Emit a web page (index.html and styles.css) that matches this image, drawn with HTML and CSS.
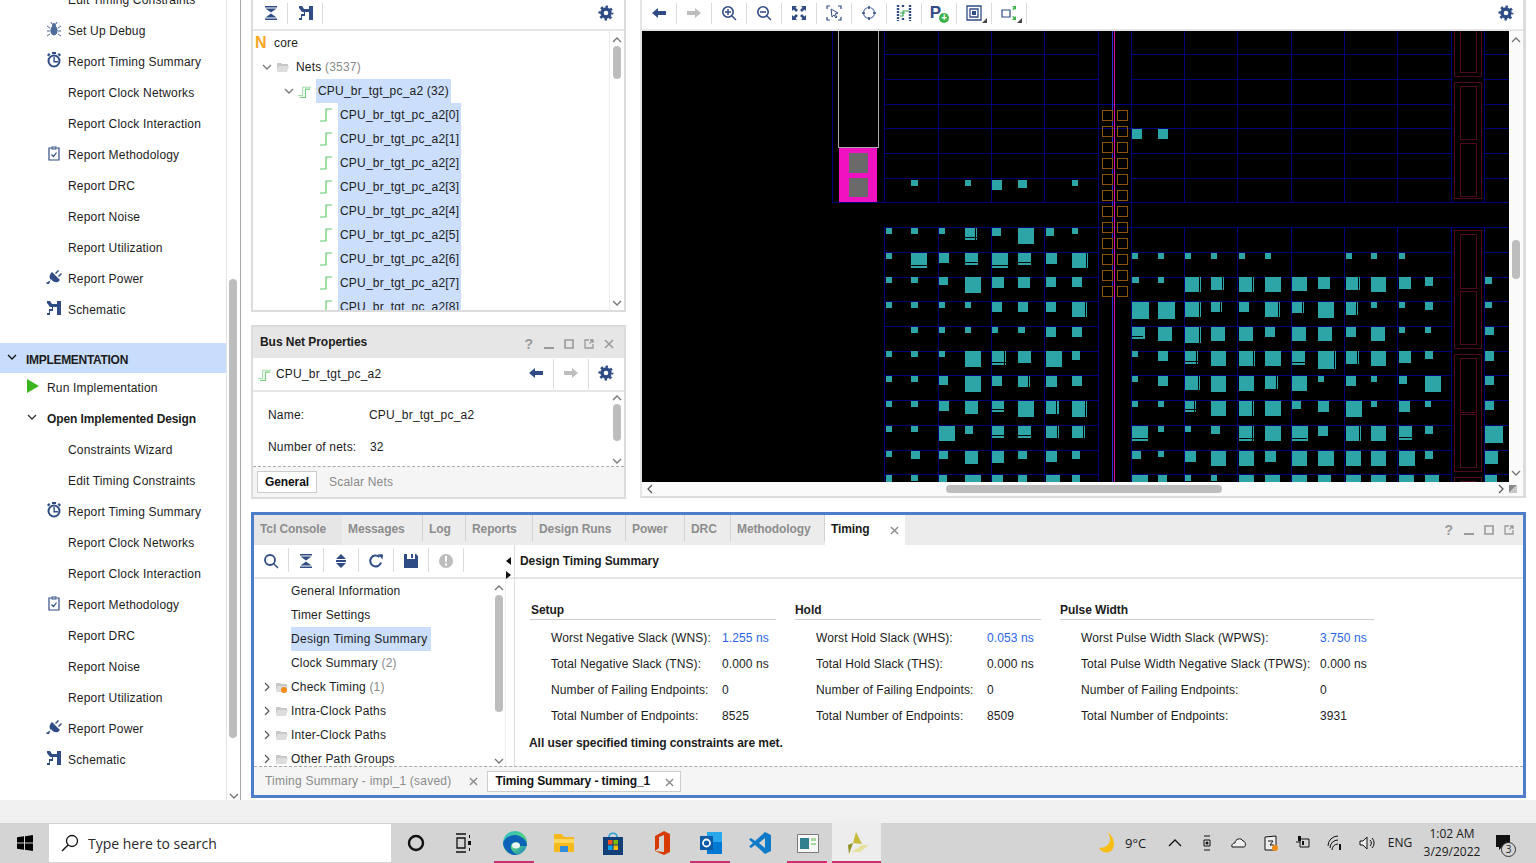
FILE: index.html
```html
<!DOCTYPE html>
<html lang="en">
<head>
<meta charset="utf-8">
<title>Vivado - Timing Summary</title>
<link rel="stylesheet" href="styles.css">
</head>
<body>
<svg class="defs" aria-hidden="true">
  <symbol id="i-gear" viewBox="0 0 16 16"><circle cx="8" cy="8" r="4" fill="none" stroke="currentColor" stroke-width="3.4"/><circle cx="8" cy="8" r="6.2" fill="none" stroke="currentColor" stroke-width="2.6" stroke-dasharray="2.43 2.44" stroke-dashoffset="1.2"/></symbol>
  <symbol id="i-left" viewBox="0 0 16 16"><path fill="currentColor" d="M1 8l6-5v3h8v4H7v3z"/></symbol>
  <symbol id="i-right" viewBox="0 0 16 16"><path fill="currentColor" d="M15 8L9 3v3H1v4h8v3z"/></symbol>
  <symbol id="i-collapse" viewBox="0 0 16 16"><path fill="currentColor" d="M2 1h12v1.500H2zM2.500 3.500h11L8 7.600zM8 8.400l5.500 4.100h-11zM2 13.500h12V15H2z"/></symbol>
  <symbol id="i-expand" viewBox="0 0 16 16"><path fill="currentColor" d="M8 1l5 5H3zM3 7h10v2H3zM3 10h10l-5 5z"/></symbol>
  <symbol id="i-schem" viewBox="0 0 16 16"><path fill="currentColor" d="M1 1h3l2 3h5V1h4v14h-4V7H7v4H4v4H1v-2h2V9h3V7H4L1 3z"/></symbol>
  <symbol id="i-clock" viewBox="0 0 16 16"><circle cx="8" cy="9" r="5.500" fill="none" stroke="currentColor" stroke-width="2"/><path fill="currentColor" d="M6 0h4v2H6zM7.400 5h1.400v4H12v1.400H7.400zM1 3l2-2 1.500 1.500-2 2zM15 3l-2-2-1.500 1.500 2 2z"/></symbol>
  <symbol id="i-clip" viewBox="0 0 16 16"><path fill="none" stroke="currentColor" stroke-width="1.200" d="M5 3H3v12h10V3h-2M6 2h4v2H6zM5.500 9.500l2 2 3-4"/></symbol>
  <symbol id="i-bug" viewBox="0 0 16 16"><ellipse cx="8" cy="9.500" rx="3.600" ry="5" fill="currentColor"/><circle cx="8" cy="4" r="2" fill="currentColor"/><path fill="none" stroke="currentColor" d="M1 5l3 2M15 5l-3 2M1 10h3M15 10h-3M1 15l3-2M15 15l-3-2M5 1l1 2M11 1l-1 2"/></symbol>
  <symbol id="i-plug" viewBox="0 0 16 16"><path fill="currentColor" d="M6 3l8 8-2 2c-3 1-6-1-7-3L3 15 1 15 0 14l5-3C3 9 3 6 6 3zM9 4l3-3 1 1-3 3zM12 7l3-3 1 1-3 3z"/></symbol>
  <symbol id="i-play" viewBox="0 0 12 14"><path fill="currentColor" d="M0 0l12 7-12 7z"/></symbol>
  <symbol id="i-down" viewBox="0 0 10 6"><path fill="none" stroke="currentColor" stroke-width="1.300" d="M1 1l4 4 4-4"/></symbol>
  <symbol id="i-up" viewBox="0 0 10 6"><path fill="none" stroke="currentColor" stroke-width="1.300" d="M1 5l4-4 4 4"/></symbol>
  <symbol id="i-chev" viewBox="0 0 6 10"><path fill="none" stroke="currentColor" stroke-width="1.200" d="M1 1l4 4-4 4"/></symbol>
  <symbol id="i-folder" viewBox="0 0 13 12"><path fill="#c8c8c8" d="M1 2h4l1 1h6v2H3L1 10z"/><path fill="#dcdcdc" d="M3 5h10l-2 6H1z"/></symbol>
  <symbol id="i-net" viewBox="0 0 12 14"><path fill="none" stroke="#62cc6c" stroke-width="1.200" d="M0 13h6V1h6"/></symbol>
  <symbol id="i-bus" viewBox="0 0 14 14"><path fill="none" stroke="#a7dfa9" stroke-width="1.200" d="M0 12h5V3h9"/><path fill="none" stroke="#74cf7b" stroke-width="1.200" d="M2 14h6V5h5"/></symbol>
  <symbol id="i-close" viewBox="0 0 10 10"><path fill="none" stroke="currentColor" stroke-width="1.600" d="M1 1l8 8M9 1l-8 8"/></symbol>
  <symbol id="i-min" viewBox="0 0 10 10"><path fill="currentColor" d="M0 8h10v2H0z"/></symbol>
  <symbol id="i-max" viewBox="0 0 10 10"><path fill="none" stroke="currentColor" stroke-width="1.600" d="M1 1h8v8H1z"/></symbol>
  <symbol id="i-float" viewBox="0 0 10 10"><path fill="none" stroke="currentColor" stroke-width="1.300" d="M5 1H1v8h8V5M5.500 4.500L9 1M6 1h3v3"/></symbol>
  <symbol id="i-zin" viewBox="0 0 16 16"><circle cx="7" cy="7" r="5.200" fill="none" stroke="currentColor" stroke-width="1.600"/><path fill="currentColor" d="M10.500 11.500l1-1 4 4-1 1zM4 6.300h6v1.400H4zM6.300 4h1.400v6H6.300z"/></symbol>
  <symbol id="i-zout" viewBox="0 0 16 16"><circle cx="7" cy="7" r="5.200" fill="none" stroke="currentColor" stroke-width="1.600"/><path fill="currentColor" d="M10.500 11.500l1-1 4 4-1 1zM4 6.300h6v1.400H4z"/></symbol>
  <symbol id="i-fit" viewBox="0 0 16 16"><path fill="currentColor" d="M1 1h5L4.500 2.700 7 5 5 7 2.700 4.500 1 6zM15 1v5l-1.700-1.500L11 7 9 5l2.500-2.300L10 1zM1 15v-5l1.700 1.500L5 9l2 2-2.500 2.300L6 15zM15 15h-5l1.500-1.700L9 11l2-2 2.300 2.500L15 10z"/></symbol>
  <symbol id="i-sel" viewBox="0 0 16 16"><path fill="none" stroke="currentColor" stroke-width="1.200" d="M1 4V1h3M12 1h3v3M15 12v3h-3M4 15H1v-3"/><path fill="none" stroke="currentColor" d="M5 4l7 4-3 1 2 3-1 1-2-3-2 2z"/></symbol>
  <symbol id="i-aim" viewBox="0 0 16 16"><circle cx="8" cy="8" r="5.500" fill="none" stroke="#5f76a5" stroke-width="1.200"/><path fill="currentColor" d="M7.200 1h1.600v3H7.200zM7.200 12h1.600v3H7.200zM1 7.200h3v1.600H1zM12 7.200h3v1.600h-3z"/></symbol>
  <symbol id="i-route" viewBox="0 0 16 16"><path fill="none" stroke="#2f4c85" stroke-width="2.400" stroke-dasharray="2 1" d="M2 0v16M14 0v16M7 0v3M7 13v3"/><path fill="none" stroke="#32a852" stroke-width="1.200" d="M4 11h3V6h6M4 8h5"/></symbol>
  <symbol id="i-nest" viewBox="0 0 16 16"><path fill="none" stroke="currentColor" stroke-width="1.300" d="M1 1h14v14H1zM4 4h8v8H4z"/><path fill="currentColor" d="M6 6h4v4H6z"/></symbol>
  <symbol id="i-box" viewBox="0 0 16 16"><path fill="none" stroke="currentColor" stroke-width="1.200" d="M1 5h8v7H1z"/><path fill="#3bb34a" d="M11 1h4v4l-1.300-1.300-1.500 1.500-1-1 1.500-1.500zM11 15h4v-4l-1.300 1.300-1.500-1.500-1 1 1.500 1.500z"/></symbol>
  <symbol id="i-search" viewBox="0 0 16 16"><circle cx="7" cy="7" r="5" fill="none" stroke="currentColor" stroke-width="1.800"/><path fill="currentColor" d="M10.500 11.500l1-1 4 4-1 1z"/></symbol>
  <symbol id="i-refresh" viewBox="0 0 16 16"><path fill="none" stroke="currentColor" stroke-width="2" d="M13 9.500A5.500 5.500 0 1 1 11.500 4"/><path fill="currentColor" d="M10 1l5 .5-.5 5z"/></symbol>
  <symbol id="i-save" viewBox="0 0 16 16"><path fill="currentColor" d="M1 1h3v5h8V1h1l2 2v12H1zM8 1h2v4H8z"/></symbol>
  <symbol id="i-warn" viewBox="0 0 16 16"><circle cx="8" cy="8" r="7" fill="currentColor"/><path fill="#fff" d="M7 3h2v6H7zM7 10.500h2v2H7z"/></symbol>
</svg>

<div class="app">
  <div class="main">
    <aside class="nav">
      <div class="nav-list">
        <div class="item plain">Edit Timing Constraints</div>
        <div class="item"><svg class="ico bugc"><use href="#i-bug"/></svg>Set Up Debug</div>
        <div class="item"><svg class="ico"><use href="#i-clock"/></svg>Report Timing Summary</div>
        <div class="item plain">Report Clock Networks</div>
        <div class="item plain">Report Clock Interaction</div>
        <div class="item"><svg class="ico"><use href="#i-clip"/></svg>Report Methodology</div>
        <div class="item plain">Report DRC</div>
        <div class="item plain">Report Noise</div>
        <div class="item plain">Report Utilization</div>
        <div class="item"><svg class="ico"><use href="#i-plug"/></svg>Report Power</div>
        <div class="item"><svg class="ico"><use href="#i-schem"/></svg>Schematic</div>
        <div class="band"><svg class="band-chev"><use href="#i-down"/></svg>IMPLEMENTATION</div>
        <div class="item run"><svg class="play"><use href="#i-play"/></svg>Run Implementation</div>
        <div class="item open"><svg class="open-chev"><use href="#i-down"/></svg>Open Implemented Design</div>
        <div class="item plain">Constraints Wizard</div>
        <div class="item plain">Edit Timing Constraints</div>
        <div class="item"><svg class="ico"><use href="#i-clock"/></svg>Report Timing Summary</div>
        <div class="item plain">Report Clock Networks</div>
        <div class="item plain">Report Clock Interaction</div>
        <div class="item"><svg class="ico"><use href="#i-clip"/></svg>Report Methodology</div>
        <div class="item plain">Report DRC</div>
        <div class="item plain">Report Noise</div>
        <div class="item plain">Report Utilization</div>
        <div class="item"><svg class="ico"><use href="#i-plug"/></svg>Report Power</div>
        <div class="item"><svg class="ico"><use href="#i-schem"/></svg>Schematic</div>
      </div>
      <div class="vbar nav-bar">
        <span class="thumb"></span>
        <svg class="vb-arrow"><use href="#i-down"/></svg>
      </div>
    </aside>

    <div class="work">
      <div class="top">
        <div class="tree-col">
          <section class="netlist">
            <div class="tools">
              <span class="btn"><svg class="tool"><use href="#i-collapse"/></svg></span>
              <span class="btn"><svg class="tool"><use href="#i-schem"/></svg></span>
              <span class="fill"></span>
              <span class="gear-btn"><svg class="tool"><use href="#i-gear"/></svg></span>
            </div>
            <div class="scroll-body">
              <div class="tree">
                <div class="row r0"><span class="n">N</span><span class="lab lab-core">core</span></div>
                <div class="row r1"><svg class="chev-d"><use href="#i-down"/></svg><svg class="fold"><use href="#i-folder"/></svg><span class="lab">Nets <em>(3537)</em></span></div>
                <div class="row r2"><svg class="chev-d"><use href="#i-down"/></svg><svg class="bus"><use href="#i-bus"/></svg><span class="lab sel">CPU_br_tgt_pc_a2 (32)</span></div>
                <div class="row r3"><svg class="net"><use href="#i-net"/></svg><span class="lab sel">CPU_br_tgt_pc_a2[0]</span></div>
                <div class="row r3"><svg class="net"><use href="#i-net"/></svg><span class="lab sel">CPU_br_tgt_pc_a2[1]</span></div>
                <div class="row r3"><svg class="net"><use href="#i-net"/></svg><span class="lab sel">CPU_br_tgt_pc_a2[2]</span></div>
                <div class="row r3"><svg class="net"><use href="#i-net"/></svg><span class="lab sel">CPU_br_tgt_pc_a2[3]</span></div>
                <div class="row r3"><svg class="net"><use href="#i-net"/></svg><span class="lab sel">CPU_br_tgt_pc_a2[4]</span></div>
                <div class="row r3"><svg class="net"><use href="#i-net"/></svg><span class="lab sel">CPU_br_tgt_pc_a2[5]</span></div>
                <div class="row r3"><svg class="net"><use href="#i-net"/></svg><span class="lab sel">CPU_br_tgt_pc_a2[6]</span></div>
                <div class="row r3"><svg class="net"><use href="#i-net"/></svg><span class="lab sel">CPU_br_tgt_pc_a2[7]</span></div>
                <div class="row r3"><svg class="net"><use href="#i-net"/></svg><span class="lab sel">CPU_br_tgt_pc_a2[8]</span></div>
              </div>
              <div class="vbar tree-bar">
                <svg class="vb-arrow"><use href="#i-up"/></svg>
                <span class="thumb"></span>
                <svg class="vb-arrow"><use href="#i-down"/></svg>
              </div>
            </div>
          </section>

          <section class="props">
            <header class="prop-head">
              <strong>Bus Net Properties</strong>
              <span class="win-icons">
                <span class="q">?</span>
                <svg class="wi"><use href="#i-min"/></svg>
                <svg class="wi"><use href="#i-max"/></svg>
                <svg class="wi"><use href="#i-float"/></svg>
                <svg class="wi"><use href="#i-close"/></svg>
              </span>
            </header>
            <div class="prop-tools">
              <svg class="bus"><use href="#i-bus"/></svg>
              <span class="prop-name">CPU_br_tgt_pc_a2</span>
              <span class="btn2"><svg class="tool"><use href="#i-left"/></svg></span>
              <span class="btn2 off"><svg class="tool"><use href="#i-right"/></svg></span>
              <span class="btn3"><svg class="tool"><use href="#i-gear"/></svg></span>
            </div>
            <div class="prop-body">
              <div class="prop-list">
                <div class="prop-line"><span class="pk">Name:</span><span>CPU_br_tgt_pc_a2</span></div>
                <div class="prop-line"><span class="pk">Number of nets:</span><span class="pv2">32</span></div>
              </div>
              <div class="vbar prop-bar">
                <svg class="vb-arrow"><use href="#i-up"/></svg>
                <span class="thumb"></span>
                <svg class="vb-arrow"><use href="#i-down"/></svg>
              </div>
            </div>
            <div class="prop-tabs">
              <span class="ptab on">General</span>
              <span class="ptab">Scalar Nets</span>
            </div>
          </section>
        </div>

        <section class="device">
          <div class="tools dev-tools">
            <span class="btn"><svg class="tool"><use href="#i-left"/></svg></span>
            <span class="btn off"><svg class="tool"><use href="#i-right"/></svg></span>
            <span class="btn"><svg class="tool"><use href="#i-zin"/></svg></span>
            <span class="btn"><svg class="tool"><use href="#i-zout"/></svg></span>
            <span class="btn"><svg class="tool"><use href="#i-fit"/></svg></span>
            <span class="btn"><svg class="tool"><use href="#i-sel"/></svg></span>
            <span class="btn"><svg class="tool"><use href="#i-aim"/></svg></span>
            <span class="btn"><svg class="tool"><use href="#i-route"/></svg></span>
            <span class="btn"><span class="p-ic">P</span><span class="p-plus">+</span></span>
            <span class="btn more"><svg class="tool"><use href="#i-nest"/></svg></span>
            <span class="btn more"><svg class="tool"><use href="#i-box"/></svg></span>
            <span class="fill"></span>
            <span class="gear-btn"><svg class="tool"><use href="#i-gear"/></svg></span>
          </div>
          <div class="dev-body">
            <div class="dev-main">
              <svg class="canvas" viewBox="642 31 867 451" shape-rendering="crispEdges">
                <rect x="642" y="31" width="867" height="451" fill="#000"/>
                <path class="grid" d="M832.500 31V202.500M884.500 31V202.500M938.500 31V202.500M991.500 31V202.500M1044.500 31V202.500M1098.500 31V482M1131.500 31V482M1184.500 31V202.500M1237.500 31V202.500M1291.500 31V202.500M1344.500 31V202.500M1397.500 31V202.500M1451.500 31V202.500M1484.500 31V202.500
                M884 54.500H1098M1131 54.500H1451M1484 54.500H1509M884 79.500H1098M1131 79.500H1451M1484 79.500H1509M884 104.500H1451M1484 104.500H1509M884 128.500H1451M1484 128.500H1509M884 153.500H1098M1131 153.500H1451M1484 153.500H1509M884 178.500H1098M1131 178.500H1451M1484 178.500H1509M832 202.500H1509
                M884.500 227V482M938.500 227V482M991.500 227V482M1044.500 227V482M1184.500 227V482M1237.500 227V482M1291.500 227V482M1344.500 227V482M1397.500 227V482M1451.500 227V482M1484.500 227V482M884 227.500H1509
                M884 252.500H1098M1131 252.500H1451M1484 252.500H1509M884 277.500H1098M1131 277.500H1451M1484 277.500H1509M884 301.500H1098M1131 301.500H1451M1484 301.500H1509M884 326.500H1098M1131 326.500H1451M1484 326.500H1509M884 351.500H1098M1131 351.500H1451M1484 351.500H1509M884 375.500H1098M1131 375.500H1451M1484 375.500H1509M884 400.500H1098M1131 400.500H1451M1484 400.500H1509M884 425.500H1098M1131 425.500H1451M1484 425.500H1509M884 450.500H1098M1131 450.500H1451M1484 450.500H1509M884 474.500H1098M1131 474.500H1451M1484 474.500H1509"/>
                <path class="wire-b" d="M1112.500 31V482"/>
                <path class="wire-m" d="M1114.500 31V482"/>
                <rect class="outline" x="838.500" y="25" width="40" height="122.500"/>
                <rect x="839" y="148" width="38" height="54" fill="#f012c0"/>
                <rect x="849" y="153" width="19" height="20" fill="#6a6a6a"/>
                <rect x="849" y="178" width="19" height="19" fill="#6a6a6a"/>
                <path class="io" d="M1102.500 110.500h10v10h-10zM1117.500 110.500h10v10h-10zM1102.500 126.500h10v10h-10zM1117.500 126.500h10v10h-10zM1102.500 142.500h10v10h-10zM1117.500 142.500h10v10h-10zM1102.500 158.500h10v10h-10zM1117.500 158.500h10v10h-10zM1102.500 174.500h10v10h-10zM1117.500 174.500h10v10h-10zM1102.500 190.500h10v10h-10zM1117.500 190.500h10v10h-10zM1102.500 206.500h10v10h-10zM1117.500 206.500h10v10h-10zM1102.500 222.500h10v10h-10zM1117.500 222.500h10v10h-10zM1102.500 238.500h10v10h-10zM1117.500 238.500h10v10h-10zM1102.500 254.500h10v10h-10zM1117.500 254.500h10v10h-10zM1102.500 270.500h10v10h-10zM1117.500 270.500h10v10h-10zM1102.500 286.500h10v10h-10zM1117.500 286.500h10v10h-10z"/>
                <path class="bram" d="M1454.500 25V76.500H1481.500V25M1454.500 82.500V198.500H1481.500V82.500ZM1454.500 230.500V348.500H1481.500V230.500ZM1454.500 354.500V471.500H1481.500V354.500ZM1454.500 490V477.500H1481.500V490
                M1460.500 25V72.500H1476.500V25M1460.500 86.500V139.500H1476.500V86.500ZM1460.500 143.500V196.500H1476.500V143.500ZM1460.500 234.500V288.500H1476.500V234.500ZM1460.500 291.500V344.500H1476.500V291.500ZM1460.500 358.500V412.500H1476.500V358.500ZM1460.500 414.500V467.500H1476.500V414.500ZM1460.500 490V481.500H1476.500V490"/>
                <path class="cell" d="M911 180h7v6h-7zM965 180h6v6h-6zM992 180h10v10h-10zM1018 180h9v8h-9zM1072 180h6v6h-6zM1132 129h10v10h-10zM1158 129h10v10h-10z
                M886 228h6v6h-6zM911 228h7v6h-7zM939 228h6v6h-6zM965 228h12v12h-12zM992 228h9v8h-9zM1018 228h16v16h-16zM1046 228h8v8h-8zM1072 228h6v6h-6z
                M886 253h6v6h-6zM911 253h16v15h-16zM939 253h10v10h-10zM965 253h13v12h-13zM992 253h16v15h-16zM1018 253h13v12h-13zM1046 253h11v11h-11zM1072 253h16v15h-16zM1132 253h6v6h-6zM1158 253h6v6h-6zM1185 253h6v6h-6zM1211 253h6v6h-6zM1239 253h6v6h-6zM1265 253h6v6h-6zM1346 253h6v6h-6zM1371 253h6v6h-6zM1399 253h6v6h-6z
                M886 277h6v6h-6zM911 277h7v6h-7zM939 277h9v8h-9zM965 277h16v16h-16zM992 277h12v11h-12zM1018 277h12v11h-12zM1046 277h10v10h-10zM1072 277h10v10h-10zM1132 277h7v6h-7zM1158 277h6v6h-6zM1185 277h16v15h-16zM1211 277h13v13h-13zM1239 277h15v15h-15zM1265 277h16v15h-16zM1292 277h15v14h-15zM1318 277h12v12h-12zM1346 277h14v13h-14zM1371 277h15v15h-15zM1399 277h12v12h-12zM1425 277h8v9h-8zM1485 277h7v7h-7z
                M886 302h6v6h-6zM911 302h7v6h-7zM939 302h6v6h-6zM965 302h6v6h-6zM992 302h11v10h-11zM1018 302h11v10h-11zM1046 302h10v10h-10zM1072 302h15v15h-15zM1132 302h17v17h-17zM1158 302h17v17h-17zM1185 302h16v15h-16zM1211 302h11v10h-11zM1239 302h10v10h-10zM1265 302h15v15h-15zM1292 302h12v11h-12zM1318 302h16v16h-16zM1346 302h12v13h-12zM1371 302h6v6h-6zM1399 302h6v6h-6zM1425 302h8v8h-8zM1485 302h7v6h-7z
                M911 327h7v6h-7zM939 327h6v6h-6zM965 327h6v6h-6zM992 327h6v6h-6zM1018 327h7v6h-7zM1046 327h10v10h-10zM1072 327h10v10h-10zM1132 327h13v12h-13zM1158 327h14v14h-14zM1185 327h16v16h-16zM1211 327h14v14h-14zM1239 327h14v14h-14zM1265 327h10v10h-10zM1292 327h14v14h-14zM1318 327h14v14h-14zM1346 327h10v10h-10zM1371 327h14v14h-14zM1399 327h6v6h-6zM1425 327h6v6h-6zM1485 327h9v8h-9z
                M886 351h6v6h-6zM911 351h7v6h-7zM939 351h6v6h-6zM965 351h16v16h-16zM992 351h14v14h-14zM1018 351h13v12h-13zM1046 351h16v16h-16zM1072 351h8v9h-8zM1132 351h6v6h-6zM1158 351h10v10h-10zM1185 351h13v13h-13zM1211 351h15v15h-15zM1239 351h16v15h-16zM1265 351h16v15h-16zM1292 351h13v14h-13zM1318 351h18v18h-18zM1346 351h13v13h-13zM1371 351h15v15h-15zM1399 351h12v12h-12zM1425 351h8v8h-8zM1485 351h9v10h-9z
                M886 376h6v6h-6zM911 376h7v6h-7zM939 376h9v9h-9zM965 376h16v16h-16zM992 376h11v10h-11zM1018 376h12v11h-12zM1046 376h11v11h-11zM1072 376h10v10h-10zM1132 376h6v6h-6zM1158 376h10v10h-10zM1185 376h15v14h-15zM1211 376h15v16h-15zM1239 376h15v15h-15zM1265 376h13v13h-13zM1292 376h15v15h-15zM1318 376h6v6h-6zM1346 376h10v10h-10zM1371 376h6v6h-6zM1399 376h8v8h-8zM1425 376h16v16h-16zM1485 376h9v9h-9z
                M886 401h6v6h-6zM911 401h7v6h-7zM939 401h10v10h-10zM965 401h13v13h-13zM992 401h12v11h-12zM1018 401h16v16h-16zM1046 401h13v13h-13zM1072 401h15v16h-15zM1132 401h6v6h-6zM1158 401h6v6h-6zM1185 401h11v11h-11zM1211 401h15v15h-15zM1239 401h15v15h-15zM1265 401h16v15h-16zM1292 401h9v8h-9zM1318 401h11v11h-11zM1346 401h16v16h-16zM1371 401h6v6h-6zM1399 401h11v11h-11zM1425 401h6v6h-6zM1485 401h9v9h-9z
                M886 426h6v6h-6zM911 426h7v6h-7zM939 426h16v15h-16zM965 426h8v8h-8zM992 426h12v12h-12zM1018 426h13v12h-13zM1046 426h13v12h-13zM1072 426h13v12h-13zM1132 426h16v15h-16zM1158 426h6v6h-6zM1185 426h6v6h-6zM1211 426h9v8h-9zM1239 426h15v15h-15zM1265 426h16v15h-16zM1292 426h16v15h-16zM1318 426h10v10h-10zM1346 426h15v15h-15zM1371 426h15v15h-15zM1399 426h13v14h-13zM1425 426h8v8h-8zM1485 426h18v17h-18z
                M886 451h6v6h-6zM911 451h9v8h-9zM939 451h9v8h-9zM965 451h13v13h-13zM992 451h12v12h-12zM1018 451h9v8h-9zM1046 451h11v11h-11zM1072 451h8v8h-8zM1132 451h9v8h-9zM1158 451h6v6h-6zM1185 451h11v11h-11zM1211 451h15v15h-15zM1239 451h15v15h-15zM1265 451h11v11h-11zM1292 451h15v15h-15zM1318 451h16v15h-16zM1346 451h15v15h-15zM1371 451h15v15h-15zM1399 451h16v15h-16zM1425 451h8v8h-8zM1485 451h13v13h-13z
                M886 475h6v7h-6zM911 475h7v6h-7zM939 475h8v7h-8zM965 475h16v7h-16zM992 475h11v7h-11zM1018 475h9v7h-9zM1046 475h14v7h-14zM1072 475h8v7h-8zM1132 475h16v7h-16zM1158 475h9v7h-9zM1185 475h6v6h-6zM1211 475h6v6h-6zM1239 475h15v7h-15zM1265 475h15v7h-15zM1292 475h15v7h-15zM1318 475h13v7h-13zM1346 475h15v7h-15zM1371 475h15v7h-15zM1399 475h15v7h-15zM1425 475h14v7h-14zM1485 475h12v7h-12z"/>
                <path class="gap" d="M975.500 228v12M965 237.500h12M1086.500 253v15M911 265.500h16M992 265.500h16M965 262.500h13M1018 262.500h13M1199.500 277v15M1222.500 277v13M1252.500 277v15M1358.500 277v13M1199.500 302v15M1220.500 302v10M1278.500 302v15M1302.500 302v11M1356.500 302v13M1028.500 302v10M1002.500 302v10M1085.500 302v15M1143 336.500h-11M1199.500 327v16M1004.500 351v14M992 362.500h14M1196.500 351v13M1253.500 351v15M1305 362.500h-13M1334.500 351v18M1185 361.500h13M1357.500 351v13M1198.500 376v14M1276.500 376v13M1028.500 376v11M1002.500 376v10M992 409.500h12M1085.500 401v16M1056.500 401v13M1194.500 401v11M1185 409.500h11M1252.500 401v15M1057.500 426v12M1083.500 426v12M1018 435.500h13M992 435.500h12M1132 438.500h16M1239 438.500h15M1252.500 426v15M1307 438.500h-15M1359.500 426v15M1399 437.500h13"/>
              </svg>
              <div class="vbar dev-bar">
                <svg class="vb-arrow"><use href="#i-up"/></svg>
                <span class="thumb"></span>
                <svg class="vb-arrow"><use href="#i-down"/></svg>
              </div>
            </div>
            <div class="hbar">
              <svg class="hb-l"><use href="#i-chev"/></svg>
              <span class="hthumb"></span>
              <svg class="hb-r"><use href="#i-chev"/></svg>
              <span class="grip"></span>
            </div>
          </div>
        </section>
      </div>

      <section class="timing">
        <div class="tabs">
          <span class="tab t-tcl">Tcl Console</span>
          <span class="tab t-msg">Messages</span>
          <span class="tab t-log">Log</span>
          <span class="tab t-rep">Reports</span>
          <span class="tab t-run">Design Runs</span>
          <span class="tab t-pow">Power</span>
          <span class="tab t-drc">DRC</span>
          <span class="tab t-met">Methodology</span>
          <span class="tab on t-tim">Timing<svg class="x"><use href="#i-close"/></svg></span>
          <span class="win-icons tab-icons">
            <span class="q">?</span>
            <svg class="wi"><use href="#i-min"/></svg>
            <svg class="wi"><use href="#i-max"/></svg>
            <svg class="wi"><use href="#i-float"/></svg>
          </span>
        </div>
        <div class="split">
          <div class="left-pane">
            <div class="pane-head">
              <span class="btn"><svg class="tool"><use href="#i-search"/></svg></span>
              <span class="btn"><svg class="tool"><use href="#i-collapse"/></svg></span>
              <span class="btn"><svg class="tool"><use href="#i-expand"/></svg></span>
              <span class="btn"><svg class="tool"><use href="#i-refresh"/></svg></span>
              <span class="btn"><svg class="tool"><use href="#i-save"/></svg></span>
              <span class="btn off"><svg class="tool"><use href="#i-warn"/></svg></span>
              <span class="divider-arrows"></span>
            </div>
            <div class="pane-body">
              <div class="rep-tree">
                <div class="rep"><span class="rl">General Information</span></div>
                <div class="rep"><span class="rl">Timer Settings</span></div>
                <div class="rep"><span class="rl sel">Design Timing Summary</span></div>
                <div class="rep"><span class="rl">Clock Summary <em>(2)</em></span></div>
                <div class="rep folder"><svg class="chev-r"><use href="#i-chev"/></svg><svg class="fold"><use href="#i-folder"/></svg><i class="dot"></i><span class="rl">Check Timing <em>(1)</em></span></div>
                <div class="rep folder"><svg class="chev-r"><use href="#i-chev"/></svg><svg class="fold"><use href="#i-folder"/></svg><span class="rl">Intra-Clock Paths</span></div>
                <div class="rep folder"><svg class="chev-r"><use href="#i-chev"/></svg><svg class="fold"><use href="#i-folder"/></svg><span class="rl">Inter-Clock Paths</span></div>
                <div class="rep folder"><svg class="chev-r"><use href="#i-chev"/></svg><svg class="fold"><use href="#i-folder"/></svg><span class="rl">Other Path Groups</span></div>
              </div>
              <div class="vbar rep-bar">
                <svg class="vb-arrow"><use href="#i-up"/></svg>
                <span class="thumb"></span>
                <svg class="vb-arrow"><use href="#i-down"/></svg>
              </div>
            </div>
          </div>
          <div class="right-pane">
            <div class="pane-head title">Design Timing Summary</div>
            <div class="summary">
              <div class="groups">
                <div class="group g-setup">
                  <h4>Setup</h4>
                  <div class="kv"><span>Worst Negative Slack (WNS):</span><span class="link">1.255 ns</span></div>
                  <div class="kv"><span>Total Negative Slack (TNS):</span><span>0.000 ns</span></div>
                  <div class="kv"><span>Number of Failing Endpoints:</span><span>0</span></div>
                  <div class="kv"><span>Total Number of Endpoints:</span><span>8525</span></div>
                </div>
                <div class="group g-hold">
                  <h4>Hold</h4>
                  <div class="kv"><span>Worst Hold Slack (WHS):</span><span class="link">0.053 ns</span></div>
                  <div class="kv"><span>Total Hold Slack (THS):</span><span>0.000 ns</span></div>
                  <div class="kv"><span>Number of Failing Endpoints:</span><span>0</span></div>
                  <div class="kv"><span>Total Number of Endpoints:</span><span>8509</span></div>
                </div>
                <div class="group g-pulse">
                  <h4>Pulse Width</h4>
                  <div class="kv"><span>Worst Pulse Width Slack (WPWS):</span><span class="link">3.750 ns</span></div>
                  <div class="kv"><span>Total Pulse Width Negative Slack (TPWS):</span><span>0.000 ns</span></div>
                  <div class="kv"><span>Number of Failing Endpoints:</span><span>0</span></div>
                  <div class="kv"><span>Total Number of Endpoints:</span><span>3931</span></div>
                </div>
              </div>
              <p class="met">All user specified timing constraints are met.</p>
            </div>
          </div>
        </div>
        <div class="doc-tabs">
          <span class="doc">Timing Summary - impl_1 (saved)</span>
          <svg class="x doc-x"><use href="#i-close"/></svg>
          <span class="doc on">Timing Summary - timing_1<svg class="x"><use href="#i-close"/></svg></span>
        </div>
      </section>
    </div>
  </div>

  <div class="status"></div>

  <footer class="taskbar">
    <span class="start"><svg class="win" viewBox="0 0 16 16"><path fill="#000" d="M0 2.300l7-1v6.300H0zM8 1.200l8-1.200v7.600H8zM0 8.500h7v6.300l-7-1zM8 8.500h8V16l-8-1.200z"/></svg></span>
    <div class="search">
      <svg class="mag" viewBox="0 0 18 18"><circle cx="11" cy="7" r="5.500" fill="none" stroke="#111" stroke-width="1.300"/><path stroke="#111" stroke-width="1.500" d="M7 11l-6 6"/></svg>
      <span>Type here to search</span>
    </div>
    <span class="app-ic"><svg class="tb" viewBox="0 0 24 24"><circle cx="12" cy="12" r="7" fill="none" stroke="#111" stroke-width="2.400"/></svg></span>
    <span class="app-ic"><svg class="tb" viewBox="0 0 24 24"><path fill="none" stroke="#111" stroke-width="1.300" d="M3 3h10M3 21h10M4 7h8v10H4z"/><path fill="#111" d="M15 10h3v4h-3z"/><path stroke="#111" d="M16.500 4v3M16.500 17v3"/></svg></span>
    <span class="app-ic on first-on"><svg class="tb" viewBox="0 0 24 24"><defs><linearGradient id="eg" x1="0" y1="0" x2="1" y2="1"><stop offset="0" stop-color="#2fb8d0"/><stop offset=".55" stop-color="#52d281"/><stop offset="1" stop-color="#1279c9"/></linearGradient></defs><circle cx="12" cy="12" r="12" fill="url(#eg)"/><path fill="#0d62b8" d="M0 12C1 20 8 25 15 24c-5-2-8-6-7-10 1-3 6-4 8-2 1 1 1 3 0 3h8C24 9 18 4 12 4 6 4 1 8 0 12z"/><ellipse cx="13" cy="14.500" rx="4" ry="3" fill="#eef4f8"/></svg></span>
    <span class="app-ic"><svg class="tb" viewBox="0 0 24 24"><path fill="#f5b91e" d="M2 3h8l2 3h10v15H2z"/><path fill="#ffd75e" d="M2 8h20v4H2z"/><path fill="#2f8cd8" d="M8 15h8v6H8z"/></svg></span>
    <span class="app-ic"><svg class="tb" viewBox="0 0 24 24"><path fill="none" stroke="#2aa0d8" stroke-width="1.500" d="M8 6c0-5 8-5 8 0"/><path fill="#123f78" d="M2 6h20v18H2z"/><path fill="#f25022" d="M7 9h4.500v4.500H7z"/><path fill="#7fba00" d="M12.500 9H17v4.500h-4.500z"/><path fill="#00a4ef" d="M7 14.500h4.500V19H7z"/><path fill="#ffb900" d="M12.500 14.500H17V19h-4.500z"/></svg></span>
    <span class="app-ic"><svg class="tb" viewBox="0 0 24 24"><path fill="#d83b01" d="M14 0l6 3v18l-6 3-9-4 9 1V4L9 6v11l-4 3V5z"/></svg></span>
    <span class="app-ic on"><svg class="tb" viewBox="0 0 24 24"><path fill="#28a8ea" d="M8 1h15v11H8z"/><path fill="#0078d4" d="M8 11h15v12H8z"/><path fill="#0a5ca8" d="M1 5h13v14H1z"/><circle cx="7.500" cy="12" r="3.500" fill="none" stroke="#fff" stroke-width="1.800"/></svg></span>
    <span class="app-ic"><svg class="tb" viewBox="0 0 24 24"><path fill="#0e7ac8" d="M17 1l6 3v16l-6 3L7 14l-4 3-2-1.500L5 12 1 8.500 3 7l4 3zM17 7l-6 5 6 5z"/></svg></span>
    <span class="app-ic on app-last"><svg class="tb" viewBox="0 0 24 24"><path fill="#f7f7f7" stroke="#7a7a7a" d="M1.500 3.500h21v18h-21z"/><path fill="#2f7f8f" d="M4 7h9v11H4z"/><path fill="#a8d8a0" d="M15 7h5v3h-5zM15 12h5v2h-5z"/></svg></span>
    <span class="app-ic viv"><svg class="tb" viewBox="0 0 24 24"><path fill="#c8bb3a" d="M11 1l6 12-9-1z"/><path fill="#8f9020" d="M3 14l5-2-4 11z"/><path fill="#e6e29a" d="M7 21l10-7 7 0-9 7z"/></svg></span>
    <div class="tray">
      <svg class="moon" viewBox="0 0 20 22"><path fill="#f6bd16" d="M11 0c6 6 3 16-8 16 2 4 9 7 13 2s2-14-5-18z"/></svg>
      <span class="temp">9°C</span>
      <span class="tray-i"><svg class="ti" viewBox="0 0 16 16"><path fill="none" stroke="#111" stroke-width="1.300" d="M2 11l6-6 6 6"/></svg></span>
      <span class="tray-i"><svg class="ti" viewBox="0 0 16 16"><path fill="none" stroke="#111" d="M5 1h6M5 15h6M5 5h6v6H5z"/><circle cx="8" cy="8" r="1.500" fill="#111"/></svg></span>
      <span class="tray-i"><svg class="ti" viewBox="0 0 16 16"><path fill="#eee" stroke="#111" d="M1 12c-1-3 2-4 3-4 0-4 6-6 8-2 3 0 3 6 1 6z"/></svg></span>
      <span class="tray-i"><svg class="ti" viewBox="0 0 16 16"><path fill="#eee" stroke="#111" d="M2 2l11-1v14H2z"/><path fill="none" stroke="#111" d="M5 6h5l-3 4h4"/><circle cx="12" cy="13" r="3" fill="#f28c13"/></svg></span>
      <span class="tray-i"><svg class="ti" viewBox="0 0 16 16"><path fill="none" stroke="#111" d="M5 4h9v8H5zM5 7H1"/><path fill="#111" d="M3 1h3v5H3zM7 6h2v4H7z"/></svg></span>
      <span class="tray-i"><svg class="ti" viewBox="0 0 16 16"><path fill="none" stroke="#111" d="M1 11a10 10 0 0 1 10-10M3 13a8 8 0 0 1 8-8M5 15a6 6 0 0 1 6-6"/><path fill="#111" d="M12 9h2v6h-2z"/></svg></span>
      <span class="tray-i"><svg class="ti" viewBox="0 0 16 16"><path fill="#eee" stroke="#111" d="M1 6h3l4-4v12l-4-4H1z"/><path fill="none" stroke="#111" d="M11 5a4 4 0 0 1 0 6M13 3a7 7 0 0 1 0 10"/></svg></span>
      <span class="eng">ENG</span>
      <span class="clock"><span>1:02 AM</span><span>3/29/2022</span></span>
      <span class="notif"><svg class="ti" viewBox="0 0 16 16"><path fill="#111" d="M1 0h14v12H7l-3 3v-3H1z"/></svg><b>3</b></span>
    </div>
  </footer>
</div>
</body>
</html>
```
FILE: styles.css
```css
* { box-sizing: border-box; }
html, body { margin: 0; padding: 0; }
body {
  width: 1536px;
  height: 863px;
  overflow: hidden;
  background: #fff;
  color: #1c1c1c;
  font: 12px/16px "Liberation Sans", Arial, sans-serif;
  letter-spacing: .2px;
}
strong, h4 { letter-spacing: -.05px; }
.defs { width: 0; height: 0; display: block; }
em { font-style: normal; color: #8a8a8a; }
svg { display: block; flex: none; }

.app { display: grid; grid-template-rows: 800px 23px 40px; height: 863px; }
.main { display: flex; min-height: 0; }

/* left navigator */
.nav { width: 241px; flex: none; display: flex; height: 800px; overflow: hidden; }
.nav-list { width: 227px; flex: none; margin-top: -16px; border-right: 1px solid #e2e2e2; overflow: hidden; height: 816px; letter-spacing: .18px; }
.item { height: 31px; display: flex; align-items: center; white-space: nowrap; padding-left: 46px; }
.item.plain { padding-left: 68px; }
.ico { width: 16px; height: 16px; margin-right: 6px; margin-top: -4px; color: #2f4c85; }
.ico.bugc { color: #4d6b9b; }
.band {
  height: 30px; margin-top: 18px; background: #c8dcfb; display: flex; align-items: center;
  padding: 3px 0 0 7px; font-weight: bold; letter-spacing: -.3px;
}
.band-chev { width: 10px; height: 6px; margin-right: 9px; margin-top: -6px; color: #111; }
.item.run { height: 30px; padding: 0 0 0 27px; }
.play { width: 12px; height: 14px; margin-right: 8px; margin-top: -4px; color: #3ab520; }
.item.open { padding-left: 27px; font-weight: bold; letter-spacing: -.1px; }
.open-chev { width: 10px; height: 6px; margin-right: 10px; margin-top: -3px; color: #333; }

/* scrollbars */
.vbar { position: relative; flex: none; display: flex; flex-direction: column; align-items: center; justify-content: space-between; background: #fff; }
.vb-arrow { width: 10px; height: 6px; color: #757575; }
.thumb { display: block; background: #bdbdbd; border-radius: 4px; width: 8px; }
.nav-bar { width: 14px; padding: 279px 0 1px 2px; border-right: 1px solid #a8a8a8; height: 800px; justify-content: flex-start; align-items: flex-start; }
.nav-bar .thumb { height: 459px; margin-bottom: 55px; }

.work { flex: 1; min-width: 0; padding: 0 10px 0 10px; display: flex; flex-direction: column; }
.top { height: 512px; flex: none; display: flex; gap: 14px; }
.tree-col { width: 375px; flex: none; display: flex; flex-direction: column; }

.tools { height: 31px; flex: none; display: flex; border-bottom: 2px solid #e6e6e6; background: #fff; }
.btn { width: 35px; height: 29px; flex: none; display: flex; align-items: center; justify-content: center; position: relative; color: #2f4c85; }
.btn::after { content: ""; position: absolute; right: 0; top: 3px; bottom: 5px; width: 1px; background: #dcdcdc; }
.btn.off { color: #bdbdbd; }
.tool { width: 16px; height: 16px; margin-top: -3px; }
.dev-tools .tool { margin-right: 1px; }
.fill { flex: 1; }
.gear-btn { width: 36px; display: flex; align-items: center; justify-content: center; color: #2f4c85; }

.netlist { height: 312px; flex: none; border: 2px solid #dcdcdc; border-top: 0; display: flex; flex-direction: column; }
.netlist .tools { padding-left: 0; }
.scroll-body { flex: 1; min-height: 0; display: flex; overflow: hidden; }
.tree { flex: 1; min-width: 0; overflow: hidden; }
.row { height: 24px; display: flex; align-items: center; white-space: nowrap; }
.lab { height: 24px; line-height: 24px; padding: 0 2px; }
.sel { background: #cbdefc; }
.r0 { padding-left: 2px; }
.n { color: #f6a623; font-weight: bold; font-size: 16px; width: 17px; }
.lab-core { padding-left: 2px; }
.chev-d { width: 10px; height: 6px; color: #777; }
.fold { width: 13px; height: 12px; }
.bus { width: 13px; height: 14px; }
.net { width: 12px; height: 14px; }
.r1 { padding-left: 9px; }
.r1 .fold { margin-left: 4px; margin-right: 5px; }
.r1 .lab { padding-left: 2px; }
.r2 { padding-left: 31px; }
.r2 .bus { margin-left: 4px; margin-right: 5px; }
.r3 { padding-left: 67px; }
.r3 .net { margin-right: 6px; }
.tree-bar { width: 15px; border-left: 1px solid #ececec; padding: 6px 0 4px; }
.tree-bar .thumb { height: 33px; margin: 3px 0 auto; }

.props { margin-top: 13px; height: 174px; flex: none; border: 2px solid #dcdcdc; display: flex; flex-direction: column; background: #f5f5f5; }
.prop-head { height: 31px; flex: none; display: flex; align-items: center; background: #e6e6e6; padding: 0 0 2px 7px; }
.win-icons { margin-left: auto; display: flex; align-items: center; gap: 10px; color: #9a9a9a; padding-right: 10px; }
.prop-head .win-icons { margin-top: 4px; }
.q { width: 10px; font-weight: bold; font-size: 14px; text-align: center; color: #9a9a9a; }
.wi { width: 10px; height: 10px; }
.prop-tools { height: 34px; flex: none; background: #fff; display: flex; align-items: center; padding-left: 5px; border-bottom: 2px solid #e6e6e6; }
.prop-tools .bus { margin-right: 5px; }
.prop-name { flex: 1; }
.btn2 { width: 35px; height: 30px; display: flex; align-items: center; justify-content: center; border-right: 1px solid #dcdcdc; color: #2f4c85; }
.btn2.off { color: #bdbdbd; }
.btn3 { width: 35px; display: flex; justify-content: center; color: #2f4c85; padding-right: 2px; }
.prop-body { height: 75px; flex: none; display: flex; background: #fff; border-bottom: 1px dashed #aaa; }
.prop-list { flex: 1; padding: 7px 0 0 15px; }
.prop-line { display: flex; height: 32px; align-items: center; }
.pk { width: 101px; flex: none; }
.pv2 { margin-left: 1px; }
.prop-bar { width: 15px; padding: 3px 0 2px; }
.prop-bar .thumb { height: 37px; margin: 3px 0 auto; }
.prop-tabs { display: flex; align-items: center; padding: 1px 0 0 4px; gap: 12px; height: 28px; }
.ptab { color: #8a8a8a; }
.ptab.on { height: 22px; line-height: 20px; padding: 0 6px; background: #fff; border: 1px solid #ccc; color: #111; font-weight: bold; width: 60px; text-align: center; letter-spacing: -.1px; }

/* device */
.device { width: 886px; height: 498px; flex: none; border-right: 3px solid #dcdcdc; border-left: 2px solid #e6e6e6; border-bottom: 2px solid #dcdcdc; display: flex; flex-direction: column; }
.dev-tools .gear-btn { width: 34px; }
.p-ic { font-weight: bold; font-size: 17px; color: #2f4c85; margin-top: -3px; letter-spacing: 0; }
.p-plus { width: 10px; height: 10px; line-height: 9px; font-size: 10px; font-weight: bold; color: #fff; background: #3bb34a; border-radius: 50%; text-align: center; margin: 6px 0 0 -2px; letter-spacing: 0; }
.btn.more::before { content: ""; position: absolute; right: 5px; bottom: 6px; border-style: solid; border-width: 0 0 5px 5px; border-color: transparent transparent #444 transparent; }
.dev-body { flex: 1; min-height: 0; display: flex; flex-direction: column; }
.dev-main { display: flex; height: 451px; flex: none; }
.canvas { width: 867px; height: 451px; }
.grid { fill: none; stroke: #00007a; stroke-width: 1; }
.wire-b { stroke: #3030d8; stroke-width: 1; }
.wire-m { stroke: #d810a8; stroke-width: 1; }
.outline { fill: none; stroke: #a8a8a8; stroke-width: 1; }
.io { fill: none; stroke: #8a5410; stroke-width: 1; }
.bram { fill: none; stroke: #4e0a22; stroke-width: 1; }
.cell { fill: #2da4a6; }
.gap { fill: none; stroke: #000; stroke-width: 1; }
.dev-bar { width: 14px; background: #fafafa; padding: 6px 0 6px; }
.dev-bar .thumb { height: 39px; margin: 197px 0 auto; }
.hbar { height: 14px; background: #fafafa; display: flex; align-items: center; position: relative; }
.hb-l { width: 6px; height: 10px; transform: scaleX(-1); margin-left: 5px; color: #555; }
.hthumb { width: 276px; height: 8px; border-radius: 4px; background: #bdbdbd; margin-left: 293px; }
.hb-r { width: 6px; height: 10px; margin-left: 276px; color: #555; }
.grip { width: 8px; height: 8px; margin-left: 5px; background: linear-gradient(135deg, #8a8a8a 50%, #c8c8c8 50%); }

/* timing panel */
.timing { height: 286px; flex: none; border: 3px solid #4e7ec9; display: flex; flex-direction: column; background: #fff; }
.tabs { height: 30px; flex: none; display: flex; background: #ececec; }
.tab { height: 30px; line-height: 28px; padding-left: 6px; font-weight: bold; color: #8c8c8c; position: relative; letter-spacing: -.1px; }
.tab::after { content: ""; position: absolute; right: 0; top: 0; height: 26px; width: 1px; background: #d2d2d2; }
.t-tcl { width: 88px; background: #e6e6e6; }
.t-tcl::after { display: none; }
.t-msg { width: 81px; }
.t-log { width: 43px; }
.t-rep { width: 67px; }
.t-run { width: 93px; }
.t-pow { width: 59px; }
.t-drc { width: 46px; }
.t-met { width: 94px; }
.tab.on { width: 80px; background: #fff; color: #1c1c1c; }
.tab.on::after { display: none; }
.tab .x { position: absolute; right: 6px; top: 11px; }
.x { width: 9px; height: 9px; color: #8c8c8c; }
.tab-icons { padding-right: 9px; height: 30px; margin-top: 0; }

.split { height: 221px; flex: none; display: flex; }
.left-pane { width: 261px; flex: none; border-right: 1px solid #dcdcdc; display: flex; flex-direction: column; }
.pane-head { height: 34px; flex: none; display: flex; border-bottom: 2px solid #e6e6e6; position: relative; }
.pane-head .btn { height: 32px; }
.pane-head .tool { margin-top: 0; margin-right: 1px; }
.divider-arrows { position: absolute; right: 3px; top: 12px; width: 0; height: 0; border-style: solid; border-width: 4px 5px 4px 0; border-color: transparent #111 transparent transparent; }
.divider-arrows::after { content: ""; position: absolute; left: 0; top: 10px; border-style: solid; border-width: 4px 0 4px 5px; border-color: transparent transparent transparent #111; }
.pane-body { flex: 1; min-height: 0; display: flex; overflow: hidden; }
.rep-tree { flex: 1; min-width: 0; overflow: hidden; letter-spacing: .18px; }
.rep { height: 24px; padding-left: 37px; display: flex; align-items: center; position: relative; white-space: nowrap; }
.rl { height: 24px; line-height: 24px; }
.rl.sel { padding-right: 3px; letter-spacing: .28px; }
.rep.folder { padding-left: 10px; }
.chev-r { width: 6px; height: 10px; color: #555; margin-right: 5px; }
.rep .fold { margin-right: 3px; }
.dot { position: absolute; left: 27px; top: 12px; width: 6px; height: 6px; border-radius: 50%; background: #f28c13; }
.rep-bar { width: 14px; border-right: 1px solid #ececec; padding: 6px 0 2px; margin-right: 8px; }
.rep-bar .thumb { height: 117px; margin: 4px 0 auto; }

.right-pane { flex: 1; min-width: 0; display: flex; flex-direction: column; }
.pane-head.title { align-items: center; padding-left: 5px; font-weight: bold; letter-spacing: -.08px; }
.summary { flex: 1; padding: 23px 0 0 14px; letter-spacing: .1px; }
.groups { display: flex; gap: 19px; margin-left: 1px; }
.group { flex: none; }
.group h4 { margin: 0 0 5px; height: 18px; line-height: 16px; font-size: 12px; border-bottom: 1px solid #cfcfcf; }
.g-setup h4 { padding-left: 1px; }
.g-setup, .g-hold { width: 246px; }
.g-pulse { width: 314px; }
.kv { height: 26px; display: flex; align-items: center; padding-left: 21px; white-space: nowrap; }
.kv span:first-child { flex: none; }
.g-setup .kv span:first-child, .g-hold .kv span:first-child { width: 171px; }
.g-pulse .kv span:first-child { width: 239px; }
.link { color: #2a64e8; }
.met { margin: 0; font-weight: bold; padding-top: 6px; height: 22px; letter-spacing: -.05px; }

.doc-tabs { flex: none; height: 29px; background: #f5f5f5; border-top: 1px dashed #aaa; display: flex; align-items: center; padding-left: 11px; }
.doc { color: #8a8a8a; letter-spacing: .22px; }
.doc-x { margin-left: 18px; margin-right: 9px; }
.doc.on { position: relative; width: 194px; height: 21px; line-height: 19px; padding-left: 7px; background: #fff; border: 1px solid #ccc; color: #111; font-weight: bold; letter-spacing: -.1px; }
.doc.on .x { position: absolute; right: 6px; top: 6px; }

.status { background: #f0f0f0; }

/* taskbar */
.taskbar { background: #d4d4d4; display: flex; align-items: stretch; height: 40px; letter-spacing: 0; }
.start { width: 49px; flex: none; display: flex; align-items: center; justify-content: center; }
.win { width: 16px; height: 16px; }
.search { width: 342px; flex: none; background: #fff; margin: 1px 0; display: flex; align-items: center; padding-left: 12px; font: 14px "Open Sans", "Liberation Sans", sans-serif; color: #2a2a2a; }
.mag { width: 18px; height: 18px; margin-right: 9px; }
.app-ic { width: 49px; flex: none; display: flex; align-items: center; justify-content: center; position: relative; }
.tb { width: 24px; height: 24px; }
.app-ic.on::after { content: ""; position: absolute; left: 4px; right: 5px; bottom: 0; height: 2px; background: #d12c72; }
.app-ic.first-on { margin-left: 1px; }
.app-ic.app-last { margin-left: -1px; }
.app-ic.viv { background: #ededed; box-shadow: inset 0 -2px 0 #d12c72; }
.tray { margin-left: auto; width: 446px; flex: none; display: flex; align-items: center; padding-right: 17px; color: #1a1a1a; font-family: "Open Sans", "Liberation Sans", sans-serif; }
.moon { width: 20px; height: 22px; margin: 0 6px; }
.temp { width: 37px; padding-left: 3px; font-size: 13px; }
.tray-i { width: 32px; display: flex; justify-content: center; }
.ti { width: 16px; height: 16px; }
.eng { width: 34px; text-align: center; font-size: 12px; }
.clock { width: 70px; display: flex; flex-direction: column; align-items: center; font-size: 12px; line-height: 18px; }
.notif { width: 32px; display: flex; justify-content: center; position: relative; }
.notif b { position: absolute; right: 3px; bottom: -6px; width: 15px; height: 15px; border: 1px solid #333; border-radius: 50%; text-align: center; font: 10px/13px "Open Sans", sans-serif; background: #d4d4d4; }
```
